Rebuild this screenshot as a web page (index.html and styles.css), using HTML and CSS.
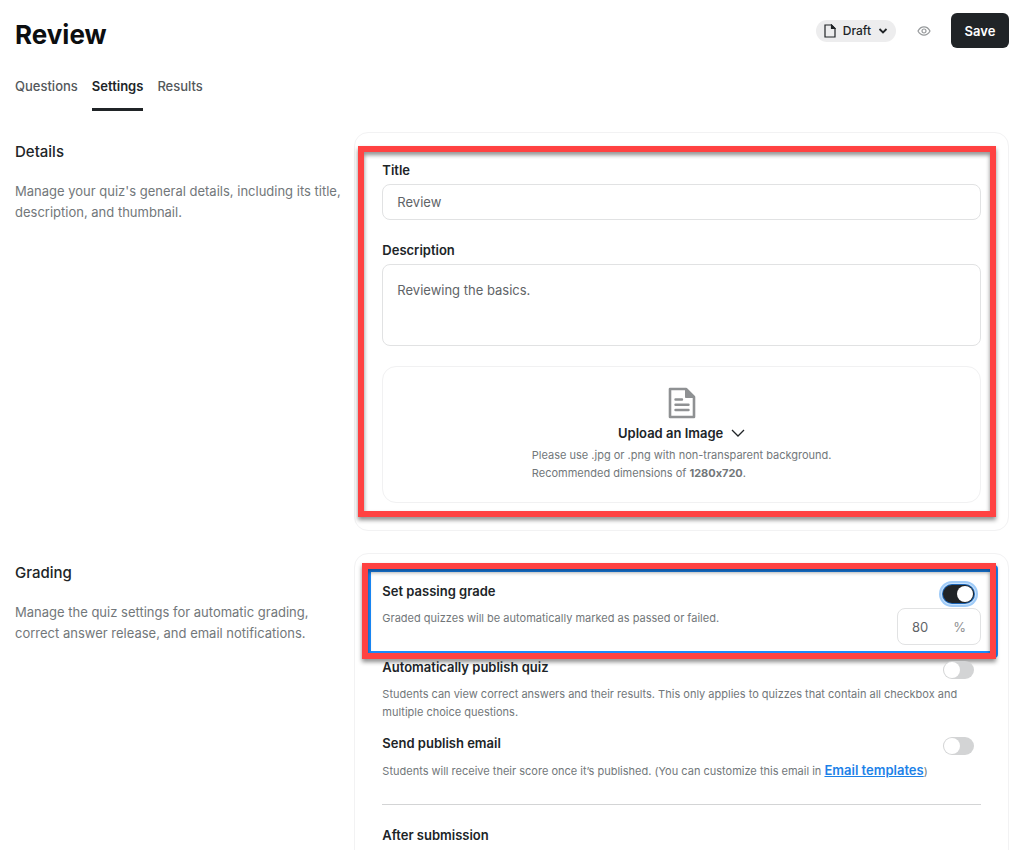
FILE: index.html
```html
<!DOCTYPE html>
<html lang="en">
  <head>
    <meta charset="utf-8" />
    <meta name="viewport" content="width=device-width, initial-scale=1" />
    <title>Review - Settings</title>
    <link rel="stylesheet" href="styles.css">
  </head>
  <body>
    <header class="topbar">
      <h1>Review</h1>
      <div class="actions">
        <button class="status" type="button">
          <svg width="12" height="14" viewBox="0 0 12 14" fill="none" stroke="#202427" stroke-width="1.2">
            <path d="M1 1h6.5L11 4.5V13H1z" />
            <path d="M7.5 1v3.5H11z" fill="#202427" />
          </svg>
          Draft
          <svg width="10" height="8" viewBox="0 0 10 8" fill="none" stroke="#202427" stroke-width="1.8">
            <path d="M1.5 2L5 5.5 8.5 2" />
          </svg>
        </button>
        <button class="preview" type="button" aria-label="Preview">
          <svg width="14" height="10" viewBox="0 0 14 10" fill="none" stroke="#96999b" stroke-width="1.2">
            <path d="M1 5C2.5 2.2 4.6.9 7 .9S11.5 2.2 13 5C11.5 7.8 9.4 9.1 7 9.1S2.5 7.8 1 5z" />
            <circle cx="7" cy="5" r="2" />
          </svg>
        </button>
        <button class="save" type="button">Save</button>
      </div>
    </header>

    <nav class="tabs">
      <a href="#questions">Questions</a>
      <a href="#settings" class="active">Settings</a>
      <a href="#results">Results</a>
    </nav>

    <main>
      <section class="about">
        <h2>Details</h2>
        <p>Manage your quiz's general details, including its title, description, and thumbnail.</p>
      </section>
      <form class="card">
        <div class="field">
          <label for="title">Title</label>
          <input id="title" type="text" value="Review" />
        </div>
        <div class="field">
          <label for="description">Description</label>
          <textarea id="description">Reviewing the basics.</textarea>
        </div>
        <div class="upload">
          <svg width="28" height="32" viewBox="0 0 28 32" fill="none" stroke="#8f9193" stroke-width="2.6">
            <path d="M2 2h16l8 8v20H2z" stroke-linejoin="round" />
            <path d="M17.5 2v8.5H26z" fill="#8f9193" stroke-width="1" />
            <path d="M7.5 12.5H14M7.5 17.8h13M7.5 23h13" stroke-linecap="round" stroke-width="2.4" />
          </svg>
          <button type="button">
            Upload an Image
            <svg width="14" height="8" viewBox="0 0 14 8" fill="none" stroke="#202427" stroke-width="1.3">
              <path d="M1 1l6 6 6-6" />
            </svg>
          </button>
          <p>Please use .jpg or .png with non-transparent background.<br />Recommended dimensions of <b>1280x720</b>.</p>
        </div>
        <div class="highlight highlight-details"></div>
      </form>

      <section class="about">
        <h2>Grading</h2>
        <p>Manage the quiz settings for automatic grading, correct answer release, and email notifications.</p>
      </section>
      <form class="card">
        <div class="setting">
          <div class="focus-ring"></div>
          <div class="text">
            <label for="passing">Set passing grade</label>
            <p>Graded quizzes will be automatically marked as passed or failed.</p>
          </div>
          <div class="control">
            <input id="passing" class="toggle focused" type="checkbox" checked />
            <div class="percent">
              <input type="text" value="80" aria-label="Passing grade" />
              <span>%</span>
            </div>
          </div>
          <div class="highlight highlight-grade"></div>
        </div>
        <div class="setting">
          <div class="text">
            <label for="publish">Automatically publish quiz</label>
            <p>Students can view correct answers and their results. This only applies to quizzes that contain all checkbox and multiple choice questions.</p>
          </div>
          <div class="control">
            <input id="publish" class="toggle" type="checkbox" />
          </div>
        </div>
        <div class="setting">
          <div class="text">
            <label for="email">Send publish email</label>
            <p>Students will receive their score once it’s published. (You can customize this email in <a href="#templates">Email templates</a>)</p>
          </div>
          <div class="control">
            <input id="email" class="toggle" type="checkbox" />
          </div>
        </div>
        <hr />
        <h3>After submission</h3>
      </form>
    </main>
  </body>
</html>
```
FILE: styles.css
```css
* {
  box-sizing: border-box;
}
body {
  margin: 0;
  padding: 0 15px;
  background: #fff;
  color: #202427;
  font: 13px/20px Inter, "Liberation Sans", sans-serif;
  font-variant-ligatures: no-contextual;
}
h1, h2, h3, p {
  margin: 0;
}
button, input, textarea {
  font: inherit;
  color: inherit;
}
button {
  padding: 0;
  border: 0;
  background: none;
  cursor: pointer;
}
svg {
  display: block;
}

.topbar {
  display: flex;
  justify-content: space-between;
  align-items: center;
  padding-top: 13px;
}
h1 {
  font-size: 26px;
  line-height: 44px;
  font-weight: 700;
  color: #0c0e10;
}
.actions {
  display: flex;
  align-items: center;
  align-self: flex-start;
}
.status {
  display: flex;
  align-items: center;
  gap: 7px;
  height: 22px;
  padding: 0 8px;
  border-radius: 11px;
  background: #ededee;
  font-size: 12px;
  font-weight: 500;
}
.preview {
  margin: 0 20px 0 21px;
}
.save {
  width: 58px;
  height: 35px;
  border-radius: 6px;
  background: #202427;
  color: #fff;
  font-weight: 600;
}

.tabs {
  display: flex;
  gap: 14px;
  padding-top: 19px;
  margin-bottom: 21px;
}
.tabs a {
  padding-bottom: 12px;
  border-bottom: 3px solid transparent;
  color: #54585b;
  font-weight: 500;
  text-decoration: none;
}
.tabs .active {
  border-color: #202427;
  color: #202427;
  font-weight: 600;
}

main {
  display: grid;
  grid-template-columns: 1fr 2fr;
  gap: 22px 12px;
}
.about {
  padding-top: 10px;
}
.about h2 {
  margin-bottom: 19px;
  font-size: 15px;
  line-height: 20px;
  font-weight: 500;
}
.about p {
  color: #72777a;
  line-height: 21px;
}
.card {
  position: relative;
  padding: 27px;
  border: 1px solid #f2f2f3;
  border-radius: 14px;
}

.field {
  display: flex;
  flex-direction: column;
  gap: 4px;
  margin-bottom: 20px;
}
.field label {
  font-weight: 600;
}
.field input, .field textarea {
  width: 100%;
  height: 36px;
  padding: 0 14px;
  border: 1px solid #e1e2e3;
  border-radius: 8px;
  background: #fff;
  color: #5f6467;
  outline: none;
}
.field textarea {
  height: 82px;
  padding: 15px 14px;
  resize: none;
}
.upload {
  display: flex;
  flex-direction: column;
  align-items: center;
  padding: 20px 0;
  border: 1px solid #f1f1f2;
  border-radius: 14px;
}
.upload button {
  display: flex;
  align-items: center;
  gap: 8px;
  margin: 4px 0 3px;
  font-weight: 600;
}
.upload p, .setting p {
  color: #72777a;
  font-size: 11px;
  line-height: 18px;
}

.setting {
  position: relative;
  display: flex;
  justify-content: space-between;
  margin-bottom: 12px;
}
.text {
  flex: 1;
  margin-right: -24px;
}
.text label, h3 {
  display: block;
  font-size: 13px;
  line-height: 20px;
  font-weight: 600;
}
.text p {
  margin-top: 8px;
}
.text a {
  color: #1d82e8;
  font-size: 13px;
  font-weight: 600;
}
.control {
  display: flex;
  flex-direction: column;
  align-items: flex-end;
}
.toggle {
  appearance: none;
  display: flex;
  width: 31px;
  height: 18px;
  margin: 4px 7px 5px;
  padding: 1px;
  border-radius: 9px;
  background: #d3d4d5;
}
.toggle::before {
  content: "";
  width: 16px;
  height: 16px;
  border-radius: 50%;
  background: #fff;
}
.toggle:checked {
  justify-content: flex-end;
  background: #202427;
}
.focused {
  box-shadow: 0 0 0 1px #1c64b4, 0 0 0 2px #c9e2fb, 0 0 0 4px #9fcbf8;
}
.percent {
  display: flex;
  align-items: center;
  justify-content: space-between;
  width: 84px;
  height: 37px;
  padding: 0 14px;
  border: 1px solid #e1e2e3;
  border-radius: 8px;
  color: #5f6467;
}
.percent input {
  width: 30px;
  padding: 0;
  border: 0;
  outline: none;
}
.percent span {
  color: #8f9193;
}
hr {
  margin: 24px 0 20px;
  border: 0;
  border-top: 1px solid #d3d4d5;
}

/* call-out frames drawn over the form */
.highlight {
  position: absolute;
  border: 6px solid #ff4242;
  filter: drop-shadow(0 3px 2px rgba(0, 0, 0, 0.45));
  pointer-events: none;
}
.highlight-details {
  inset: 13px 12px 13px 3px;
}
.highlight-grade {
  inset: -18px -15px -14px -20px;
}
.focus-ring {
  position: absolute;
  inset: -16px -17px -13px -18px;
  border: 7px solid #1a8cff;
  border-radius: 4px;
  pointer-events: none;
}
```
